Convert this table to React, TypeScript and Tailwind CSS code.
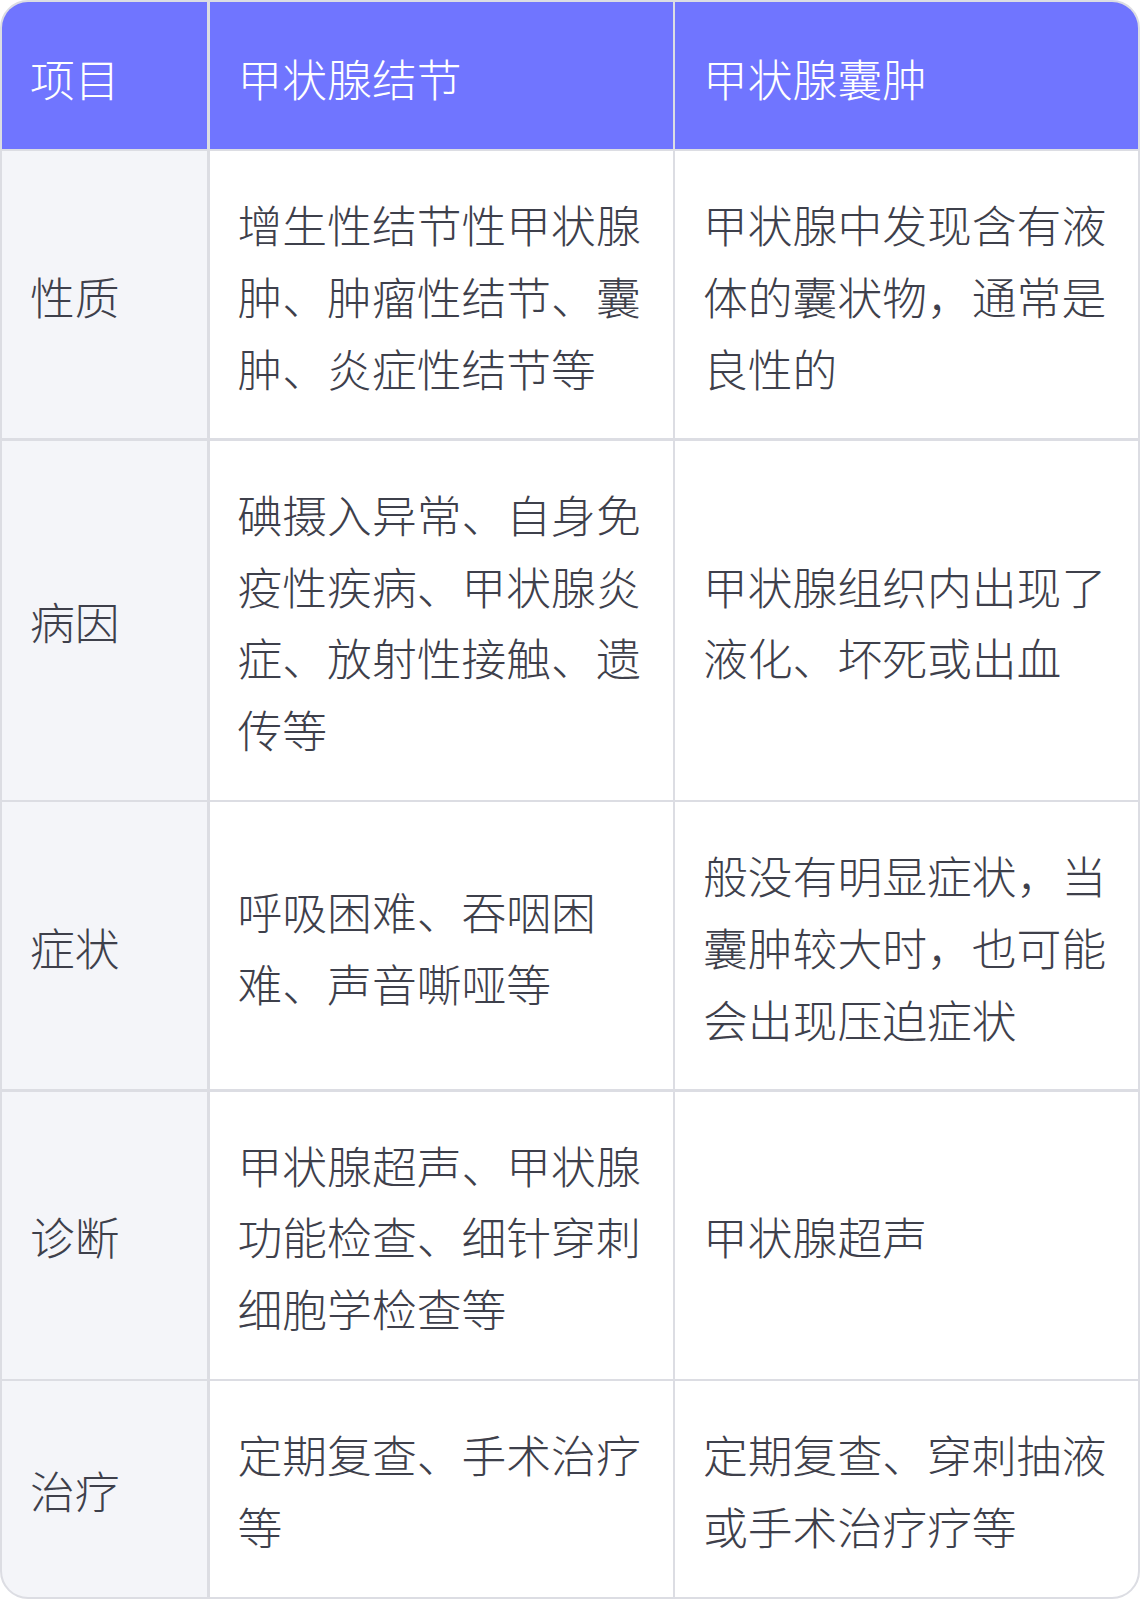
import React from "react";

const rows: [string, string, string][] = [
  ["性质", "增生性结节性甲状腺肿、肿瘤性结节、囊肿、炎症性结节等", "甲状腺中发现含有液体的囊状物，通常是良性的"],
  ["病因", "碘摄入异常、自身免疫性疾病、甲状腺炎症、放射性接触、遗传等", "甲状腺组织内出现了液化、坏死或出血"],
  ["症状", "呼吸困难、吞咽困难、声音嘶哑等", "般没有明显症状，当囊肿较大时，也可能会出现压迫症状"],
  ["诊断", "甲状腺超声、甲状腺功能检查、细针穿刺细胞学检查等", "甲状腺超声"],
  ["治疗", "定期复查、手术治疗等", "定期复查、穿刺抽液或手术治疗疗等"],
];

export default function App() {
  return (
    <div
      className="w-[1140px] h-[1600px] bg-white font-light"
      style={{ fontFamily: '"Noto Sans CJK SC", "Noto Sans", sans-serif' }}
    >
      <div className="w-[1140px] border-[2.8px] border-[#dcdde3] rounded-[28px] overflow-hidden bg-[#dcdde3]">
        <div className="grid grid-cols-[205px_1fr_1fr] gap-x-[2.5px] gap-y-[2.6px] text-[44.8px] leading-[1.6]">
          <div className="bg-[#7075ff] text-white px-[28px] pt-[40px] pb-[35px] flex items-center">项目</div>
          <div className="bg-[#7075ff] text-white px-[28px] pt-[40px] pb-[35px] flex items-center">甲状腺结节</div>
          <div className="bg-[#7075ff] text-white px-[28px] pt-[40px] pb-[35px] flex items-center">甲状腺囊肿</div>
          {rows.map((r, i) => (
            <React.Fragment key={i}>
              <div className="bg-[#f4f5f9] text-[#3e404b] px-[28px] pt-[37px] pb-[35px] flex items-center">{r[0]}</div>
              <div className="bg-white text-[#3e404b] px-[28px] pt-[37px] pb-[35px] flex items-center">
                <span>{r[1]}</span>
              </div>
              <div className="bg-white text-[#3e404b] px-[28px] pt-[37px] pb-[35px] flex items-center">
                <span>{r[2]}</span>
              </div>
            </React.Fragment>
          ))}
        </div>
      </div>
    </div>
  );
}
